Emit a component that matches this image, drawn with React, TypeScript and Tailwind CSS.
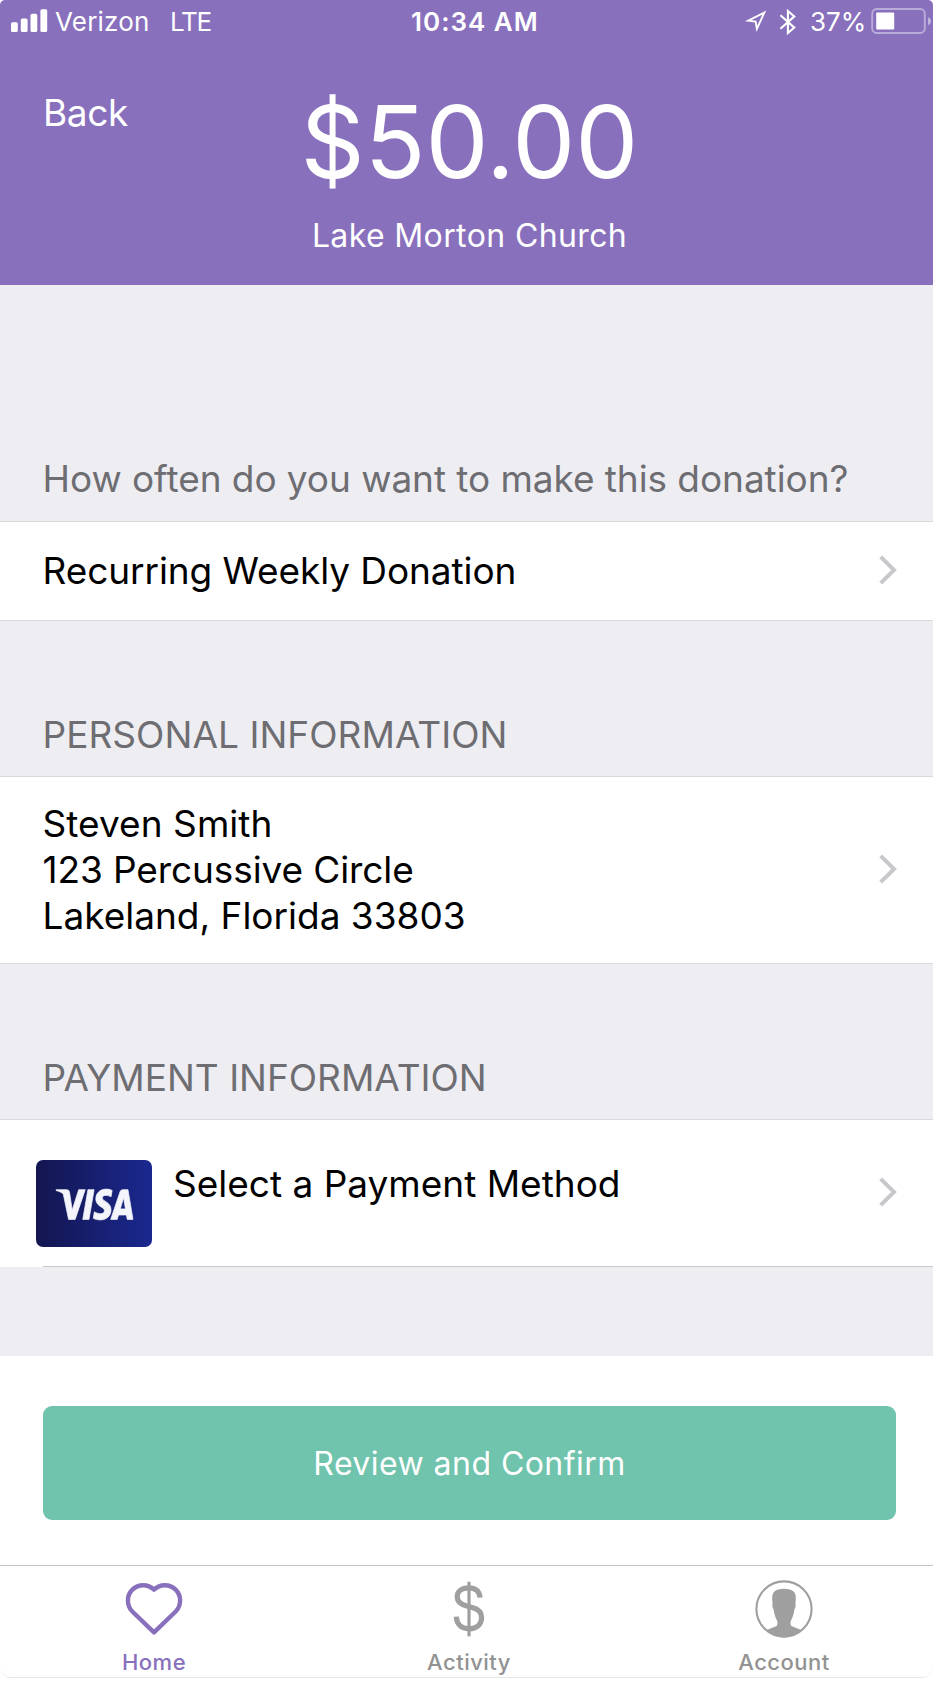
import type { ReactNode } from "react";
import { SiVisa } from "react-icons/si";

function SignalBars() {
  return (
    <svg width="37" height="23" viewBox="0 0 37 23" fill="#fff">
      <rect x="0" y="13.2" width="6.8" height="9.8" rx="1.6" />
      <rect x="9.8" y="9.5" width="6.8" height="13.5" rx="1.6" />
      <rect x="19.5" y="4.8" width="6.8" height="18.2" rx="1.6" />
      <rect x="29.4" y="0.2" width="6.8" height="22.8" rx="1.6" />
    </svg>
  );
}

function LocationArrow() {
  return (
    <svg width="24" height="24" viewBox="0 0 24 24" fill="none" stroke="#fff" strokeWidth="1.9">
      <path d="M21.3 2.6 5.2 10.7 12.6 11.5 13.9 18.9Z" strokeLinejoin="miter" strokeMiterlimit="6" />
    </svg>
  );
}

function Bluetooth() {
  return (
    <svg width="18" height="28" viewBox="0 0 18 28" fill="none" stroke="#fff" strokeWidth="2.1">
      <path d="M1.4 7.3 15.3 19.6 8.9 25V3L15.3 8.4 1.4 20.7" strokeLinejoin="miter" />
    </svg>
  );
}

function Battery() {
  return (
    <svg width="60" height="26" viewBox="0 0 60 26" fill="none">
      <rect x="1.2" y="1" width="52.6" height="24" rx="4.5" stroke="#fff" strokeOpacity="0.42" strokeWidth="1.9" />
      <rect x="5.200" y="4.400" width="18" height="17" rx="1" fill="#fff" />
      <path d="M57.200 9.200c1.700.9 2.600 2.300 2.600 4s-.9 3.100-2.600 4z" fill="#fff" fillOpacity="0.55" />
    </svg>
  );
}

function Chevron() {
  return (
    <svg width="18" height="30" viewBox="0 0 18 30" fill="none" stroke="#c7c7cc" strokeWidth="4">
      <path d="M1.700 1.900 15 15 1.700 28.100" />
    </svg>
  );
}

function Heart() {
  return (
    <svg width="58" height="54" viewBox="0 0 58 54" fill="none" stroke="#8870bd" strokeWidth="4.4">
      <path
        strokeLinejoin="round"
        d="M29 7.600C25.800 4.600 22.200 3.200 18.300 3.200 9.700 3.200 2.900 10 2.900 18.500c0 4.400 1.500 8 4.400 11L29 50.400 50.700 29.500c2.900-3 4.400-6.600 4.400-11C55.100 10 48.300 3.200 39.700 3.200 35.800 3.200 32.200 4.600 29 7.600Z"
      />
    </svg>
  );
}

function Dollar() {
  return (
    <svg width="32" height="56" viewBox="0 0 32 56" fill="none" stroke="#9f9f9f">
      <path
        strokeWidth="5.2"
        d="M27 16.700C26.600 10.200 22.400 6.800 15.700 6.800 8.800 6.800 4.200 10.400 4.200 15.700c0 5 3.400 7.700 9.600 9.300l5.400 1.400c6.300 1.600 9.400 4.900 9.400 10.200 0 6.800-5 11.200-12.600 11.200C8.600 47.800 3.700 43.600 3.300 35.700"
      />
      <path strokeWidth="3.200" d="M16 .7V55.300" />
    </svg>
  );
}

function Person() {
  return (
    <svg width="58" height="58" viewBox="0 0 58 58">
      <circle cx="29" cy="29" r="27.600" fill="none" stroke="#9f9f9f" strokeWidth="2.100" />
      <path
        fill="#9f9f9f"
        d="M11.500 50.300c3.500-2.100 7-2.800 9.600-4 1.500-.8 1.600-2.900 1.200-5.300-1.700-3-3-6.800-3.700-11.600-1-1.200-1.600-3.700-1-6.200-.8-4.700-.7-8.700 1.300-11.100C20.900 9.700 24.700 8.700 29 8.700s8.100 1 10.100 3.400c2 2.400 2.100 6.400 1.300 11.100.6 2.500 0 5-1 6.200-.7 4.800-2 8.600-3.700 11.600-.4 2.400-.3 4.500 1.200 5.300 2.600 1.200 6.100 1.900 9.600 4C41.500 54.800 35.600 57.500 29 57.500S16.500 54.800 11.500 50.300Z"
      />
    </svg>
  );
}

function SectionTitle({ children, className }: { children: ReactNode; className: string }) {
  return (
    <h2 className={`flex items-end whitespace-nowrap pl-[42.5px] text-[37px] leading-[46px] text-[#6d6d72] ${className}`}>
      {children}
    </h2>
  );
}

function Tab({ icon, label, className }: { icon: ReactNode; label: string; className: string }) {
  return (
    <div className={`flex flex-1 flex-col items-center text-[22px] font-medium leading-[28px] ${className}`}>
      <div className="flex h-[58px] items-center">{icon}</div>
      <span className="mt-[10px] tracking-[0.5px]">{label}</span>
    </div>
  );
}

export default function App() {
  return (
    <div className="h-[1692px] w-[933px] overflow-hidden bg-white font-['Inter',sans-serif] text-black">
      <div className="flex h-[1678px] flex-col overflow-hidden rounded-t-[5px] rounded-b-[12px] border-b border-[#e6e6e6]">
        <header className="h-[285px] shrink-0 bg-[#8870bd] text-white">
          <div className="flex h-[44px] items-start text-[26px] leading-[44px]">
            <div className="flex w-[411px] pl-[11px]">
              <div className="mr-[7px] pt-[9px]">
                <SignalBars />
              </div>
              <span className="w-[115px] tracking-[0.2px]">Verizon</span>
              <span className="tracking-[-1.3px]">LTE</span>
            </div>
            <span className="w-[332px] font-semibold tracking-[1px]">10:34 AM</span>
            <div className="w-[36px] pt-[10px]">
              <LocationArrow />
            </div>
            <div className="w-[31px] pt-[8px]">
              <Bluetooth />
            </div>
            <span className="w-[60.500px]">37%</span>
            <div className="shrink-0 pt-[8px]">
              <Battery />
            </div>
          </div>
          <div className="flex">
            <span className="w-[240px] pl-[43px] pt-[45.5px] text-[37px] leading-[46px] tracking-[-0.4px]">Back</span>
            <div className="flex w-[459px] flex-col items-center pt-[48px]">
              <h1 className="text-[100px] leading-[100px]">$50.00</h1>
              <p className="mt-[24px] text-[32px] leading-[40px] tracking-[0.38px]">Lake Morton Church</p>
            </div>
          </div>
        </header>

        <main className="flex flex-col bg-[#eeedf2]">
          <SectionTitle className="h-[236px] pb-[19px] tracking-[-0.06px]">
            How often do you want to make this donation?
          </SectionTitle>
          <div className="flex h-[100px] items-center justify-between border-y border-[#d9d9dc] bg-white pl-[42.5px] pr-[36px]">
            <span className="text-[37px] leading-[46px] tracking-[-0.08px]">Recurring Weekly Donation</span>
            <div className="pb-[2px]">
              <Chevron />
            </div>
          </div>

          <SectionTitle className="h-[155px] pb-[18px] tracking-[0.05px]">PERSONAL INFORMATION</SectionTitle>
          <div className="flex h-[188px] items-center justify-between border-y border-[#d9d9dc] bg-white pl-[42.5px] pr-[36px]">
            <address className="text-[37px] not-italic leading-[46px]">
              <div className="tracking-[0.05px]">Steven Smith</div>
              <div className="tracking-[-0.1px]">123 Percussive Circle</div>
              <div>Lakeland, Florida 33803</div>
            </address>
            <div className="pb-[2px]">
              <Chevron />
            </div>
          </div>

          <SectionTitle className="h-[155px] pb-[18px]">PAYMENT INFORMATION</SectionTitle>
          <div className="border-t border-[#d9d9dc] bg-white">
            <div className="flex h-[146px] items-start pl-[36px] pr-[36px]">
              <div className="mt-[40px] flex h-[87px] w-[116px] items-center justify-center rounded-[7px] bg-linear-to-r from-[#131650] to-[#1a288f] pt-[2px]">
                <SiVisa
                  className="h-[31px] w-[77px] overflow-visible stroke-[#f4f4fb] stroke-[0.2] text-[#f4f4fb]"
                  viewBox="0 8.1 24 7.8"
                  preserveAspectRatio="none"
                />
              </div>
              <span className="ml-[21px] mt-[41px] flex-1 text-[37px] leading-[46px]">Select a Payment Method</span>
              <div className="mt-[57px]">
                <Chevron />
              </div>
            </div>
            <div className="ml-[43px] h-px bg-[#c8c7cc]" />
          </div>
          <div className="h-[89px]" />
        </main>

        <div className="h-[209px] shrink-0 bg-white pl-[43px] pr-[37px] pt-[50px]">
          <button className="flex h-[114px] w-full items-center justify-center rounded-[9px] bg-[#70c3ac] pt-[2px] text-[32px] leading-[40px] tracking-[0.45px] text-white">
            Review and Confirm
          </button>
        </div>

        <nav className="-ml-[3.5px] flex h-[113px] w-[945px] shrink-0 border-t border-[#c4c4c6] bg-white pt-[14px]">
          <Tab icon={<Heart />} label="Home" className="text-[#8870bd]" />
          <Tab icon={<Dollar />} label="Activity" className="text-[#929292]" />
          <Tab icon={<Person />} label="Account" className="text-[#929292]" />
        </nav>
      </div>
    </div>
  );
}
